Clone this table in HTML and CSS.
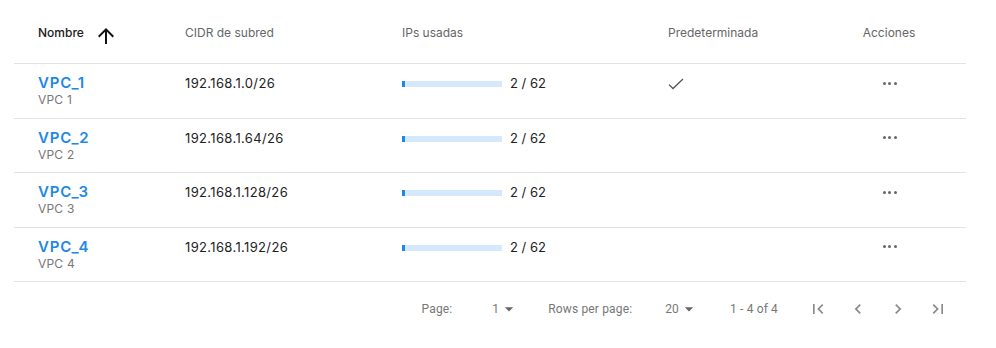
FILE: index.html
```html
<!DOCTYPE html>
<html lang="es">
<head>
<meta charset="utf-8">
<title>Subredes</title>
<link rel="stylesheet" href="styles.css">
</head>
<body>
<div class="table">
  <div class="row head">
    <div class="cell sort">Nombre
      <svg class="sort-icon" width="24" height="24" viewBox="0 0 24 24"><path d="M4 12l1.41 1.41L11 7.83V20h2V7.83l5.58 5.59L20 12l-8-8-8 8z" fill="#111"/></svg>
    </div>
    <div class="cell">CIDR de subred</div>
    <div class="cell">IPs usadas</div>
    <div class="cell">Predeterminada</div>
    <div class="cell center">Acciones</div>
  </div>

  <div class="row body">
    <div class="cell name"><a class="title">VPC_1</a><span class="sub">VPC 1</span></div>
    <div class="cell text">192.168.1.0/26</div>
    <div class="cell usage"><span class="bar"><span class="fill" style="width:3.2%"></span></span><span>2 / 62</span></div>
    <div class="cell default"><svg width="16" height="12" viewBox="0 0 16 12"><polyline points="1,6.6 5,10.5 15,1" fill="none" stroke="#555" stroke-width="1.3"/></svg></div>
    <div class="cell actions"><span class="dots"><i></i><i></i><i></i></span></div>
  </div>

  <div class="row body">
    <div class="cell name"><a class="title">VPC_2</a><span class="sub">VPC 2</span></div>
    <div class="cell text">192.168.1.64/26</div>
    <div class="cell usage"><span class="bar"><span class="fill" style="width:3.2%"></span></span><span>2 / 62</span></div>
    <div class="cell default"></div>
    <div class="cell actions"><span class="dots"><i></i><i></i><i></i></span></div>
  </div>

  <div class="row body">
    <div class="cell name"><a class="title">VPC_3</a><span class="sub">VPC 3</span></div>
    <div class="cell text">192.168.1.128/26</div>
    <div class="cell usage"><span class="bar"><span class="fill" style="width:3.2%"></span></span><span>2 / 62</span></div>
    <div class="cell default"></div>
    <div class="cell actions"><span class="dots"><i></i><i></i><i></i></span></div>
  </div>

  <div class="row body">
    <div class="cell name"><a class="title">VPC_4</a><span class="sub">VPC 4</span></div>
    <div class="cell text">192.168.1.192/26</div>
    <div class="cell usage"><span class="bar"><span class="fill" style="width:3.2%"></span></span><span>2 / 62</span></div>
    <div class="cell default"></div>
    <div class="cell actions"><span class="dots"><i></i><i></i><i></i></span></div>
  </div>

  <div class="pager">
    <span class="lbl lbl-page">Page:</span>
    <span class="sel sel-page">1<svg width="20" height="20" viewBox="0 0 24 24"><path d="M7 10l5 5 5-5z" fill="#666"/></svg></span>
    <span class="lbl lbl-rows">Rows per page:</span>
    <span class="sel sel-rows">20<svg width="20" height="20" viewBox="0 0 24 24"><path d="M7 10l5 5 5-5z" fill="#666"/></svg></span>
    <span class="range">1 - 4 of 4</span>
    <span class="btn"><svg width="20" height="20" viewBox="0 0 24 24"><path d="M18.41 16.59L13.82 12l4.59-4.59L17 6l-6 6 6 6zM6 6h2v12H6z" fill="#8a8a8a"/></svg></span>
    <span class="btn"><svg width="20" height="20" viewBox="0 0 24 24"><path d="M15.41 7.41L14 6l-6 6 6 6 1.41-1.41L10.83 12z" fill="#8a8a8a"/></svg></span>
    <span class="btn"><svg width="20" height="20" viewBox="0 0 24 24"><path d="M10 6L8.59 7.41 13.17 12l-4.58 4.59L10 18l6-6z" fill="#8a8a8a"/></svg></span>
    <span class="btn"><svg width="20" height="20" viewBox="0 0 24 24"><path d="M5.59 7.41L10.18 12l-4.59 4.59L7 18l6-6-6-6zM16 6h2v12h-2z" fill="#8a8a8a"/></svg></span>
  </div>
</div>
</body>
</html>
```

FILE: styles.css
```css
html, body {
  margin: 0;
  padding: 0;
  background: #fff;
}
body {
  font-family: Inter, "Noto Sans", sans-serif;
  color: #222;
}
.table {
  width: 952px;
  margin-left: 14px;
}
.row {
  display: grid;
  grid-template-columns: 147px 217px 266px 168px 154px;
  border-bottom: 1px solid #e3e3e3;
  box-sizing: border-box;
}
.row.head {
  height: 64px;
  align-items: center;
  padding-top: 2px;
}
.row.head .cell {
  font-size: 12px;
  color: #666;
}
.row.head .cell.sort {
  color: #1a1a1a;
  font-weight: 500;
  display: flex;
  align-items: center;
}
.sort-icon {
  margin-left: 10px;
  margin-top: 7px;
}
.cell {
  padding-left: 24px;
}
.cell.center {
  padding-left: 0;
  text-align: center;
}
.row.body {
  height: 54.5px;
  padding-top: 10px;
  align-items: start;
}
.name {
  display: flex;
  flex-direction: column;
}
.title {
  font-size: 15px;
  line-height: 18px;
  font-weight: 600;
  color: #1e88e5;
  letter-spacing: 0.8px;
}
.sub {
  font-size: 12px;
  line-height: 15px;
  color: #777;
  letter-spacing: 0.2px;
}
.text {
  font-size: 13px;
  line-height: 18px;
  color: #222;
  letter-spacing: 0.35px;
}
.usage {
  display: flex;
  align-items: center;
  height: 18px;
  font-size: 13px;
  color: #222;
}
.bar {
  display: block;
  width: 100px;
  height: 6px;
  margin-top: 2px;
  margin-right: 8px;
  background: #d6e8fb;
}
.fill {
  display: block;
  height: 100%;
  background: #1e88e5;
}
.default {
  height: 18px;
  display: flex;
  align-items: center;
}
.default svg {
  margin-top: 1px;
}
.actions {
  padding-left: 0;
  height: 18px;
  display: flex;
  align-items: center;
  justify-content: center;
}
.dots {
  display: flex;
  gap: 2.5px;
  margin-left: 1px;
}
.dots i {
  display: block;
  width: 3px;
  height: 3px;
  border-radius: 50%;
  background: #666;
}
.pager {
  display: flex;
  justify-content: flex-end;
  align-items: center;
  height: 54px;
  margin-right: 8px;
  font-family: Roboto, "Noto Sans", sans-serif;
  font-size: 12px;
  letter-spacing: 0.15px;
  color: #777;
}
.lbl-page {
  margin-right: 40px;
}
.sel {
  display: inline-flex;
  align-items: center;
  color: #777;
}
.sel-page {
  margin-right: 29px;
}
.lbl-rows {
  margin-right: 33px;
}
.sel-rows {
  margin-right: 31px;
}
.range {
  margin-right: 20px;
}
.btn {
  display: inline-flex;
  width: 40px;
  height: 40px;
  align-items: center;
  justify-content: center;
}
```
